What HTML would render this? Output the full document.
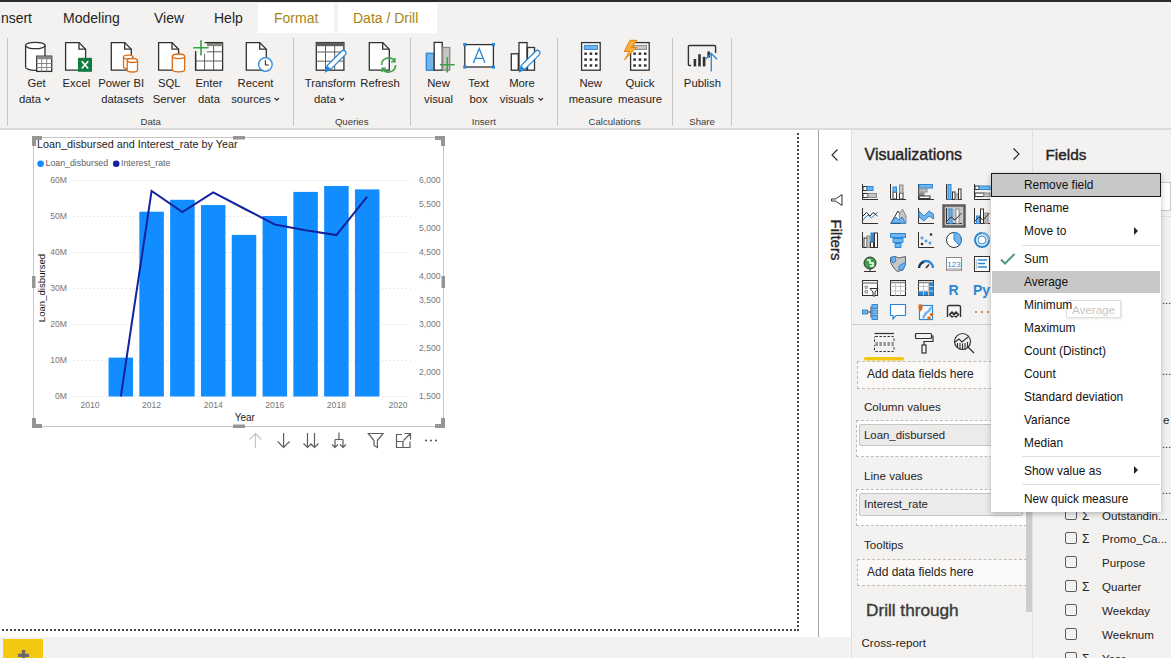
<!DOCTYPE html>
<html><head><meta charset="utf-8">
<style>
*{box-sizing:border-box;margin:0;padding:0}
html,body{width:1171px;height:658px;overflow:hidden;background:#fff}
body{position:relative;font-family:"Liberation Sans",sans-serif;color:#252423}
.a{position:absolute}
.t{position:absolute;white-space:nowrap;line-height:1}
#topbar{left:0;top:0;width:1171px;height:2px;background:#2b2b2b}
#ribbon{left:0;top:2px;width:1171px;height:126px;background:#f3f2f1}
#ribbonline{left:0;top:128px;width:1171px;height:2px;background:#dcdbda}
.tab{font-size:14px;top:11px}
.ctab{top:3px;height:30px;background:#fff}
.gold{color:#a8840f}
.sep{width:1px;background:#c8c6c4;top:38px;height:88px}
.lbl{font-size:11.3px;text-align:center;line-height:16px;position:absolute;white-space:nowrap}
.grp{font-size:9.6px;color:#3b3a39;position:absolute;top:115px;white-space:nowrap;line-height:13px}
#canvas{left:0;top:130px;width:818px;height:507px;background:#fff}
#dotr{left:797px;top:133px;width:2px;height:499px;background:repeating-linear-gradient(to bottom,#474747 0 2px,transparent 2px 4px)}
#dotb{left:2px;top:629px;width:797px;height:2px;background:repeating-linear-gradient(to right,#474747 0 2px,transparent 2px 4px)}
#vline{left:818px;top:130px;width:1px;height:507px;background:#a6a4a2}
#filters{left:819px;top:130px;width:33px;height:507px;background:#fff}
#viz{left:851px;top:130px;width:182px;height:528px;background:#f3f2f1;border-left:1px solid #e1dfdd}
#fields{left:1032px;top:130px;width:139px;height:528px;background:#f3f2f1;border-left:1px solid #e1dfdd}
#bottombar{left:0;top:637px;width:851px;height:21px;background:#f3f2f1}
#menu{left:991px;top:173px;width:170px;height:339px;background:#fff;box-shadow:0 2px 6px rgba(0,0,0,.25)}
.mi{position:absolute;left:33px;font-size:11.9px;white-space:nowrap;line-height:14px;color:#111}
</style></head><body>
<div class="a" id="topbar"></div>
<div class="a" id="ribbon"></div>
<div class="a" id="ribbonline"></div>
<!-- tabs -->
<div class="t tab" style="left:-3px">Insert</div>
<div class="t tab" style="left:63px">Modeling</div>
<div class="t tab" style="left:154px">View</div>
<div class="t tab" style="left:214px">Help</div>
<div class="a ctab" style="left:258px;width:76px"></div>
<div class="a ctab" style="left:338px;width:99px"></div>
<div class="t tab gold" style="left:274px">Format</div>
<div class="t tab gold" style="left:353px">Data / Drill</div>

<svg class="a" style="left:0;top:0" width="760" height="130" viewBox="0 0 760 130">
<g fill="none" stroke="#323130" stroke-width="1.3">
<!-- separators -->
<g stroke="#c8c6c4" stroke-width="1"><path d="M7.5 38V126M293.5 38V126M410.5 38V126M557.5 38V126M672.5 38V126M731.5 38V126"/></g>
<!-- Get data: cylinder -->
<path d="M25.6 45.5V67.2A9.7 3.2 0 0 0 45 67.2V45.5Z" fill="#fff"/>
<ellipse cx="35.3" cy="45.5" rx="9.7" ry="3.2" fill="#fff"/>
<rect x="36.7" y="56.2" width="15" height="15.2" fill="#fff"/>
<rect x="36.7" y="56.2" width="15" height="3" fill="#8a8886" stroke="none"/>
<path d="M36.7 63.5H51.7M36.7 67.5H51.7M41.7 59V71.4M46.7 59V71.4" stroke="#8a8886" stroke-width="1"/>
<!-- Excel -->
<path d="M65.6 42.6H79L85.6 49.2V70.2H65.6Z" fill="#fff"/>
<path d="M79 42.6V49.2H85.6"/>
<rect x="78" y="57.8" width="14" height="14" fill="#107c41" stroke="none"/>
<path d="M81.8 61.3L88.2 68.5M88.2 61.3L81.8 68.5" stroke="#fff" stroke-width="1.6"/>
<!-- Power BI datasets -->
<path d="M111.3 42.6H124.7L131.3 49.2V70.2H111.3Z" fill="#fff"/>
<path d="M124.7 42.6V49.2H131.3"/>
<g stroke="#d86c1a">
<path d="M123.5 57V66.5C123.5 68 125.5 68.7 128.2 68.7C131 68.7 133 68 133 66.5V57" fill="#fff"/>
<ellipse cx="128.2" cy="57" rx="4.8" ry="1.9" fill="#fff"/>
<path d="M127.2 60.5V70C127.2 71.3 129.5 72 132.4 72C135.4 72 137.5 71.3 137.5 70V60.5" fill="#fff"/>
<ellipse cx="132.4" cy="60.5" rx="5.1" ry="2" fill="#fff"/>
</g>
<!-- SQL Server -->
<path d="M158.6 42.6H172L178.6 49.2V70.2H158.6Z" fill="#fff"/>
<path d="M172 42.6V49.2H178.6"/>
<g stroke="#d86c1a">
<path d="M172.3 56.3V69.5C172.3 71 175 71.8 178.5 71.8C182 71.8 184.6 71 184.6 69.5V56.3" fill="#fff"/>
<ellipse cx="178.5" cy="56.3" rx="6.2" ry="2.3" fill="#fff"/>
</g>
<!-- Enter data -->
<rect x="195.6" y="42.6" width="27" height="27.6" fill="#fff"/>
<rect x="207" y="42.6" width="15.6" height="3.6" fill="#8a8886" stroke="none"/>
<path d="M195.6 51.8H222.6M195.6 61H222.6M204.6 46V70.2M213.6 46V70.2" stroke="#605e5c" stroke-width="1"/>
<rect x="194" y="41" width="13" height="13" fill="#f3f2f1" stroke="none"/><path d="M204.6 42.6H222.6M195.6 51V70.2" stroke="#323130" stroke-width="1.3"/><path d="M193.3 47.8H208.7M201 40.2V55.6" stroke="#3aa346" stroke-width="1.6"/>
<!-- Recent sources -->
<path d="M246.3 42.6H259.7L266.3 49.2V70.2H246.3Z" fill="#fff"/>
<path d="M259.7 42.6V49.2H266.3"/>
<circle cx="265.4" cy="64.5" r="6.8" fill="#fff" stroke="#2b88d8"/>
<path d="M265.4 60.3V65H268.8" stroke="#323130" stroke-width="1.1"/>
<!-- Transform data -->
<rect x="316.3" y="42.6" width="27.6" height="27.6" fill="#fff"/>
<rect x="316.3" y="42.6" width="27.6" height="3.6" fill="#605e5c" stroke="none"/>
<path d="M316.3 52H343.9M316.3 61.2H343.9M325.5 46V70.2M334.7 46V70.2" stroke="#605e5c" stroke-width="1"/>
<path d="M325.6 71.5L327.2 65.5L341.5 51.2C342.5 50.2 344.2 50.2 345.2 51.2C346.2 52.2 346.2 53.9 345.2 54.9L330.9 69.2Z" fill="#fff" stroke="#2b88d8" stroke-width="1.3"/>
<path d="M325.6 71.5L327.2 65.5L330.9 69.2Z" fill="#2b88d8" stroke="none"/>
<!-- Refresh -->
<path d="M369.3 42.6H382.7L389.3 49.2V70.2H369.3Z" fill="#fff"/>
<path d="M382.7 42.6V49.2H389.3"/>
<g stroke="#3aa346" stroke-width="1.6" fill="none">
<path d="M381.5 65A7 7 0 0 1 394.6 61.5M391.2 61.8H394.8V58"/>
<path d="M395.5 65A7 7 0 0 1 382.4 68.5M385.8 68.2H382.2V72"/>
</g>
<!-- New visual -->
<rect x="426.3" y="53.3" width="7.6" height="16.9" fill="#72b4eb" stroke="#2b88d8"/>
<rect x="434.2" y="42.4" width="8" height="27.8" fill="#fff"/>
<rect x="442.7" y="47.5" width="7" height="22.7" fill="#c8c6c4" stroke="#8a8886"/>
<path d="M440 64.7H454.6M447.3 57V72.5" stroke="#3aa346" stroke-width="1.6"/>
<!-- Text box -->
<rect x="464.8" y="44.6" width="28.6" height="22.4" fill="#fff"/>
<g fill="#2b88d8" stroke="none"><rect x="463.2" y="43" width="3.2" height="3.2"/><rect x="491.8" y="43" width="3.2" height="3.2"/><rect x="463.2" y="65.4" width="3.2" height="3.2"/><rect x="491.8" y="65.4" width="3.2" height="3.2"/></g>
<path d="M473.4 63L479.2 48.4L485 63M475.3 58.3H483" stroke="#2b88d8" stroke-width="1.3"/>
<!-- More visuals -->
<rect x="511.3" y="53.8" width="7" height="16.4" fill="#fff"/>
<rect x="519" y="42.6" width="8" height="27.6" fill="#fff"/>
<rect x="527.5" y="47.5" width="7" height="22.7" fill="#fff"/>
<path d="M519.6 71.5L521.2 65.5L535.5 51.2C536.5 50.2 538.2 50.2 539.2 51.2C540.2 52.2 540.2 53.9 539.2 54.9L524.9 69.2Z" fill="#fff" stroke="#2b88d8" stroke-width="1.3"/>
<path d="M519.6 71.5L521.2 65.5L524.9 69.2Z" fill="#2b88d8" stroke="none"/>
<!-- New measure -->
<rect x="581.6" y="42.6" width="18.6" height="27.6" fill="#fff"/>
<rect x="584.3" y="45.4" width="13.2" height="4" fill="#72b4eb" stroke="#2b88d8" stroke-width="1"/>
<g fill="#323130" stroke="none">
<rect x="584.3" y="52.5" width="2.6" height="2.4"/><rect x="589.6" y="52.5" width="2.6" height="2.4"/><rect x="594.9" y="52.5" width="2.6" height="2.4"/>
<rect x="584.3" y="58.4" width="2.6" height="2.4"/><rect x="589.6" y="58.4" width="2.6" height="2.4"/><rect x="594.9" y="58.4" width="2.6" height="2.4"/>
<rect x="584.3" y="64.3" width="2.6" height="2.4"/><rect x="589.6" y="64.3" width="2.6" height="2.4"/><rect x="594.9" y="64.3" width="2.6" height="2.4"/>
</g>
<!-- Quick measure -->
<rect x="630.6" y="42.6" width="18.6" height="27.6" fill="#fff"/>
<rect x="633.3" y="45.4" width="13.2" height="4" fill="#c8c6c4" stroke="#8a8886" stroke-width="1"/>
<g fill="#323130" stroke="none">
<rect x="633.3" y="52.5" width="2.6" height="2.4"/><rect x="638.6" y="52.5" width="2.6" height="2.4"/><rect x="643.9" y="52.5" width="2.6" height="2.4"/>
<rect x="633.3" y="58.4" width="2.6" height="2.4"/><rect x="638.6" y="58.4" width="2.6" height="2.4"/><rect x="643.9" y="58.4" width="2.6" height="2.4"/>
<rect x="633.3" y="64.3" width="2.6" height="2.4"/><rect x="638.6" y="64.3" width="2.6" height="2.4"/><rect x="643.9" y="64.3" width="2.6" height="2.4"/>
</g>
<path d="M630 40.3L624.3 51.5H629.5L624.5 59.8L636.6 47.5H631.5L636.8 40.3Z" fill="#fcb041" stroke="#e67e00" stroke-width="1"/>
<!-- Publish -->
<path d="M691 65.5H689.5C688.9 65.5 688.4 65 688.4 64.4V46.6C688.4 46 688.9 45.5 689.5 45.5H714.5C715.1 45.5 715.6 46 715.6 46.6V53" stroke="#323130" stroke-width="1.4"/>
<g fill="#323130" stroke="none"><rect x="693.6" y="59" width="2.6" height="7.4"/><rect x="698.2" y="54.2" width="2.6" height="12.2"/><rect x="702.8" y="56.8" width="2.6" height="9.6"/><rect x="707.4" y="51.5" width="2.6" height="6"/></g>
<path d="M711.3 71.5V53.5M705.5 59.3L711.3 53.5L717.1 59.3" stroke="#2b88d8" stroke-width="1.3"/>
</g>
</svg>
<div class="lbl" style="left:-13.5px;width:100px;top:75px">Get</div>
<div class="lbl" style="left:-20px;width:100px;top:91px">data</div>
<div class="lbl" style="left:26.4px;width:100px;top:75px">Excel</div>
<div class="lbl" style="left:71.2px;width:100px;top:75px">Power BI</div>
<div class="lbl" style="left:72.5px;width:100px;top:91px">datasets</div>
<div class="lbl" style="left:119.3px;width:100px;top:75px">SQL</div>
<div class="lbl" style="left:119.3px;width:100px;top:91px">Server</div>
<div class="lbl" style="left:159px;width:100px;top:75px">Enter</div>
<div class="lbl" style="left:159px;width:100px;top:91px">data</div>
<div class="lbl" style="left:205.5px;width:100px;top:75px">Recent</div>
<div class="lbl" style="left:201px;width:100px;top:91px">sources</div>
<div class="grp" style="left:100.6px;width:100px;text-align:center">Data</div>
<div class="lbl" style="left:280.2px;width:100px;top:75px">Transform</div>
<div class="lbl" style="left:275px;width:100px;top:91px">data</div>
<div class="lbl" style="left:330px;width:100px;top:75px">Refresh</div>
<div class="grp" style="left:301.7px;width:100px;text-align:center">Queries</div>
<div class="lbl" style="left:388.5px;width:100px;top:75px">New</div>
<div class="lbl" style="left:388.5px;width:100px;top:91px">visual</div>
<div class="lbl" style="left:428.5px;width:100px;top:75px">Text</div>
<div class="lbl" style="left:428.5px;width:100px;top:91px">box</div>
<div class="lbl" style="left:472px;width:100px;top:75px">More</div>
<div class="lbl" style="left:467px;width:100px;top:91px">visuals</div>
<div class="grp" style="left:433.8px;width:100px;text-align:center">Insert</div>
<div class="lbl" style="left:540.7px;width:100px;top:75px">New</div>
<div class="lbl" style="left:540.7px;width:100px;top:91px">measure</div>
<div class="lbl" style="left:590px;width:100px;top:75px">Quick</div>
<div class="lbl" style="left:590px;width:100px;top:91px">measure</div>
<div class="grp" style="left:564.7px;width:100px;text-align:center">Calculations</div>
<div class="lbl" style="left:652.4px;width:100px;top:75px">Publish</div>
<div class="grp" style="left:652.1px;width:100px;text-align:center">Share</div>
<svg class="a" style="left:0;top:0" width="560" height="110"><g fill="none" stroke="#323130" stroke-width="1.1">
<path d="M45 98L47.2 100.2L49.4 98M274.6 98L276.8 100.2L279 98M339.6 98L341.8 100.2L344 98M538.6 98L540.8 100.2L543 98"/></g></svg>

<div class="a" id="canvas"></div>
<svg class="a" style="left:0;top:0" width="818" height="637" viewBox="0 0 818 637">
<rect x="33.5" y="137.5" width="410" height="289" fill="none" stroke="#c8c6c4" stroke-width="1"/>
<line x1="74" y1="396.5" x2="412" y2="396.5" stroke="#d6d6d6" stroke-width="1" stroke-dasharray="1 3"/>
<line x1="74" y1="180.5" x2="412" y2="180.5" stroke="#d6d6d6" stroke-width="1" stroke-dasharray="1 3"/>
<line x1="74" y1="216.5" x2="412" y2="216.5" stroke="#d6d6d6" stroke-width="1" stroke-dasharray="1 3"/>
<line x1="74" y1="252.5" x2="412" y2="252.5" stroke="#d6d6d6" stroke-width="1" stroke-dasharray="1 3"/>
<line x1="74" y1="288.5" x2="412" y2="288.5" stroke="#d6d6d6" stroke-width="1" stroke-dasharray="1 3"/>
<line x1="74" y1="324.5" x2="412" y2="324.5" stroke="#d6d6d6" stroke-width="1" stroke-dasharray="1 3"/>
<line x1="74" y1="360.5" x2="412" y2="360.5" stroke="#d6d6d6" stroke-width="1" stroke-dasharray="1 3"/>
<rect x="108.55" y="357.6" width="24.5" height="38.90" fill="#118dff"/>
<rect x="139.35" y="211.7" width="24.5" height="184.80" fill="#118dff"/>
<rect x="170.15" y="199.8" width="24.5" height="196.70" fill="#118dff"/>
<rect x="200.95" y="205.1" width="24.5" height="191.40" fill="#118dff"/>
<rect x="231.75" y="234.9" width="24.5" height="161.60" fill="#118dff"/>
<rect x="262.55" y="216" width="24.5" height="180.50" fill="#118dff"/>
<rect x="293.35" y="191.9" width="24.5" height="204.60" fill="#118dff"/>
<rect x="324.15" y="186" width="24.5" height="210.50" fill="#118dff"/>
<rect x="354.95" y="189.4" width="24.5" height="207.10" fill="#118dff"/>
<polyline points="120.8,396.5 151.6,190.9 182.4,212.1 213.2,192.3 244.0,208.5 274.8,224.5 305.6,230.2 336.4,235.1 367.2,196.6" fill="none" stroke="#12239e" stroke-width="2" stroke-linejoin="miter"/>
<path d="M32 136H42V140H36V146H32Z" fill="#979593"/>
<path d="M445 136H435V140H441V146H445Z" fill="#979593"/>
<path d="M32 428H42V424H36V418H32Z" fill="#979593"/>
<path d="M445 428H435V424H441V418H445Z" fill="#979593"/>
<rect x="233" y="136" width="12" height="3.5" fill="#979593"/>
<rect x="233" y="424.5" width="12" height="3.5" fill="#979593"/>
<rect x="32" y="276" width="3.5" height="12" fill="#979593"/>
<rect x="441.5" y="276" width="3.5" height="12" fill="#979593"/>
<circle cx="40.6" cy="163.8" r="3.3" fill="#118dff"/>
<circle cx="116.2" cy="163.8" r="3.3" fill="#12239e"/>
<g fill="none" stroke="#605e5c" stroke-width="1.2">
<path d="M255.4 448V433.5M249.5 439.5L255.4 433.5L261.3 439.5" stroke="#c8c6c4"/>
<path d="M283.6 433V447.5M277.7 441.5L283.6 447.5L289.5 441.5"/>
<path d="M307.5 433V447.5M303.5 443.5L307.5 447.5L311.5 443.5M314.5 433V447.5M310.5 443.5L314.5 447.5L318.5 443.5"/>
<path d="M339 432.5V439.5M335 439.5H343M335 439.5V447.5M343 439.5V447.5M332 444.5L335 447.5L338 444.5M340 444.5L343 447.5L346 444.5"/>
<path d="M368.3 433.5H383.1L377.4 440.5V447.5L374 445.5V440.5Z"/>
<path d="M402 434.5H396.5V447.5H410V441.5M396.5 441.5H403V447.5M404.5 433.5H410.5V439.5M410.5 433.5L403.5 440.5"/>
</g>
<g fill="#605e5c"><circle cx="426" cy="440.5" r="1.1"/><circle cx="431" cy="440.5" r="1.1"/><circle cx="436" cy="440.5" r="1.1"/></g>
</svg><div class="t" style="left:37px;top:138.5px;font-size:10.8px;color:#252423">Loan_disbursed and Interest_rate by Year</div>
<div class="t" style="left:45.5px;top:159.3px;font-size:8.8px;color:#605e5c">Loan_disbursed</div>
<div class="t" style="left:121px;top:159.3px;font-size:8.8px;color:#605e5c">Interest_rate</div>
<div class="a" style="left:27px;top:162px;width:40px;font-size:8.6px;color:#777;text-align:right;line-height:36px">60M<br>50M<br>40M<br>30M<br>20M<br>10M<br>0M</div>
<div class="a" style="left:419px;top:168px;width:40px;font-size:8.6px;color:#777;text-align:left;line-height:24px">6,000<br>5,500<br>5,000<br>4,500<br>4,000<br>3,500<br>3,000<br>2,500<br>2,000<br>1,500</div>
<div class="t" style="left:42px;top:288px;font-size:9.6px;color:#111;transform:translate(-50%,-50%) rotate(-90deg);transform-origin:center">Loan_disbursed</div>
<div class="a" style="left:60px;top:400px;width:60px;text-align:center;font-size:8.6px;color:#777;line-height:10px">2010</div>
<div class="a" style="left:121.6px;top:400px;width:60px;text-align:center;font-size:8.6px;color:#777;line-height:10px">2012</div>
<div class="a" style="left:183.2px;top:400px;width:60px;text-align:center;font-size:8.6px;color:#777;line-height:10px">2014</div>
<div class="a" style="left:244.8px;top:400px;width:60px;text-align:center;font-size:8.6px;color:#777;line-height:10px">2016</div>
<div class="a" style="left:306.4px;top:400px;width:60px;text-align:center;font-size:8.6px;color:#777;line-height:10px">2018</div>
<div class="a" style="left:368px;top:400px;width:60px;text-align:center;font-size:8.6px;color:#777;line-height:10px">2020</div>
<div class="t" style="left:234.7px;top:412.5px;font-size:10px;color:#252423">Year</div>

<div class="a" id="dotr"></div>
<div class="a" id="dotb"></div>
<div class="a" id="vline"></div>
<div class="a" id="filters"></div>
<div class="a" id="viz"></div>
<div class="a" id="fields"></div>
<div class="a" id="bottombar"></div>
<div class="a" style="left:3px;top:638px;width:1px;height:20px;background:#c8c6c4"></div><div class="a" style="left:4px;top:639px;width:39px;height:19px;background:#f2c811"></div>

<!-- Filters pane -->
<svg class="a" style="left:819px;top:129px" width="33" height="140" viewBox="819 129 33 140">
<path d="M837.5 149.5L832 155L837.5 160.5" fill="none" stroke="#252423" stroke-width="1.1"/>
<path d="M842 194.5V205.5L835.5 201H831.5V199H835.5Z" fill="none" stroke="#323130" stroke-width="1"/>
</svg>
<div class="t" style="left:835.5px;top:240px;font-size:15px;-webkit-text-stroke:0.35px #252423;color:#252423;transform:translate(-50%,-50%) rotate(90deg)">Filters</div>
<!-- Viz pane -->
<div class="t" style="left:864.5px;top:146.5px;font-size:16px;-webkit-text-stroke:0.4px #252423;color:#252423">Visualizations</div>
<svg class="a" style="left:1010px;top:146px" width="14" height="16"><path d="M3.5 2.5L9 8L3.5 13.5" fill="none" stroke="#252423" stroke-width="1.1"/></svg>
<div class="a" style="left:856.5px;top:360.5px;width:170px;height:28px;border:1px dashed #bebbb8;background:#faf9f8"></div>
<div class="t" style="left:867px;top:368px;font-size:12px;color:#252423">Add data fields here</div>
<div class="t" style="left:864px;top:401px;font-size:11.6px;color:#252423">Column values</div>
<div class="a" style="left:856px;top:420px;width:170.5px;height:37px;border:1px dashed #bebbb8;background:#fff"></div>
<div class="a" style="left:859px;top:423.5px;width:163.5px;height:22.5px;border:1px solid #c8c6c4;border-radius:2px;background:#ecebea"></div>
<div class="t" style="left:864px;top:429.5px;font-size:11.4px;color:#252423">Loan_disbursed</div>
<div class="t" style="left:864px;top:469.5px;font-size:11.6px;color:#252423">Line values</div>
<div class="a" style="left:856px;top:488.5px;width:170.5px;height:37px;border:1px dashed #bebbb8;background:#fff"></div>
<div class="a" style="left:859px;top:493px;width:163.5px;height:22.5px;border:1px solid #c8c6c4;border-radius:2px;background:#ecebea"></div>
<div class="t" style="left:864px;top:498.5px;font-size:11.4px;color:#252423">Interest_rate</div>
<div class="t" style="left:864px;top:539px;font-size:11.6px;color:#252423">Tooltips</div>
<div class="a" style="left:856.5px;top:559px;width:170px;height:27px;border:1px dashed #bebbb8;background:#faf9f8"></div>
<div class="t" style="left:867px;top:566px;font-size:12px;color:#252423">Add data fields here</div>
<div class="t" style="left:866px;top:602px;font-size:17.2px;-webkit-text-stroke:0.4px #3b3a39;color:#3b3a39">Drill through</div>
<div class="t" style="left:861.5px;top:637px;font-size:11.6px;color:#252423">Cross-report</div>
<div class="a" style="left:1026px;top:510px;width:6px;height:102px;background:#cfcdcb"></div>
<!-- Fields pane -->
<div class="t" style="left:1045.5px;top:146.5px;font-size:15.3px;-webkit-text-stroke:0.4px #252423;color:#252423">Fields</div>
<div class="a" style="left:1045px;top:182px;width:126px;height:29px;background:#fff;border:1px solid #c8c6c4"></div>
<div class="a" style="left:1033px;top:216px;width:138px;height:1px;background:#e1dfdd"></div>
<div class="a" style="left:1033px;top:502px;width:138px;height:156px;overflow:hidden">
<svg class="a" style="left:0;top:0" width="138" height="156" viewBox="1033 502 138 156">
<g fill="none" stroke="#605e5c" stroke-width="1">
<rect x="1065.5" y="508.5" width="11" height="11" rx="1.5"/>
<rect x="1065.5" y="532.5" width="11" height="11" rx="1.5"/>
<rect x="1065.5" y="556.5" width="11" height="11" rx="1.5"/>
<rect x="1065.5" y="580.5" width="11" height="11" rx="1.5"/>
<rect x="1065.5" y="604.5" width="11" height="11" rx="1.5"/>
<rect x="1065.5" y="628.5" width="11" height="11" rx="1.5"/>
<rect x="1065.5" y="652.5" width="11" height="11" rx="1.5"/>
</g>
</svg>
<div class="t" style="left:49px;top:8px;font-size:12px;color:#252423">Σ</div>
<div class="t" style="left:69px;top:8px;font-size:11.6px;color:#252423">Outstandin...</div>
<div class="t" style="left:49px;top:31px;font-size:12px;color:#252423">Σ</div>
<div class="t" style="left:69px;top:31px;font-size:11.6px;color:#252423">Promo_Ca...</div>
<div class="t" style="left:69px;top:55px;font-size:11.6px;color:#252423">Purpose</div>
<div class="t" style="left:49px;top:79px;font-size:12px;color:#252423">Σ</div>
<div class="t" style="left:69px;top:79px;font-size:11.6px;color:#252423">Quarter</div>
<div class="t" style="left:69px;top:103px;font-size:11.6px;color:#252423">Weekday</div>
<div class="t" style="left:69px;top:127px;font-size:11.6px;color:#252423">Weeknum</div>
<div class="t" style="left:49px;top:151px;font-size:12px;color:#252423">Σ</div>
<div class="t" style="left:69px;top:151px;font-size:11.6px;color:#252423">Year</div>
</div>
<!-- bottom bar plus -->
<svg class="a" style="left:4px;top:639px" width="39" height="19"><path d="M19.5 11V22M14 16.3H25" stroke="#69676a" stroke-width="3.3"/></svg>
<svg class="a" style="left:851px;top:129px" width="182" height="529" viewBox="851 129 182 529">
<g stroke-width="1" fill="none" stroke="#323130">
<!-- row1 -->
<g transform="translate(862,184)">
<path d="M0.5 0V15.5H16"/>
<rect x="1" y="2.5" width="4" height="4" fill="#fff" stroke="#323130"/><rect x="5" y="2.5" width="6" height="4" fill="#72b4eb" stroke="#2b88d8"/>
<rect x="1" y="9.5" width="5" height="4" fill="#fff" stroke="#323130"/><rect x="6" y="9.5" width="8.5" height="4" fill="#c8c6c4" stroke="#8a8886"/>
</g>
<g transform="translate(890,184)">
<path d="M0.5 0V15.5H16"/>
<rect x="3" y="8" width="3.5" height="7" fill="#fff"/><rect x="3" y="3" width="3.5" height="5" fill="#72b4eb" stroke="#2b88d8"/>
<rect x="9.5" y="9" width="3.5" height="6" fill="#fff"/><rect x="9.5" y="1" width="3.5" height="8" fill="#c8c6c4" stroke="#8a8886"/>
</g>
<g transform="translate(918,184)">
<path d="M0.5 0V15.5H16"/>
<rect x="1" y="0.5" width="13.5" height="3.5" fill="#72b4eb" stroke="#2b88d8"/>
<rect x="1" y="5" width="8" height="3" fill="#c8c6c4" stroke="#8a8886"/>
<rect x="1" y="9" width="5" height="2.5" fill="#8a8886" stroke="#8a8886"/>
<rect x="1" y="12" width="11" height="2.5" fill="#fff"/>
</g>
<g transform="translate(946,184)">
<path d="M0.5 0V15.5H16"/>
<rect x="2" y="0.5" width="3" height="15" fill="#72b4eb" stroke="#2b88d8"/>
<rect x="6.5" y="8" width="2.5" height="7.5" fill="#fff"/><rect x="9.5" y="10" width="2.5" height="5.5" fill="#c8c6c4" stroke="#8a8886"/><rect x="12.5" y="5" width="2.5" height="10.5" fill="#fff"/>
</g>
<g transform="translate(974,184)">
<path d="M0.5 0V15.5H16"/>
<rect x="1" y="2" width="4" height="3.5" fill="#fff"/><rect x="5" y="2" width="11" height="3.5" fill="#72b4eb" stroke="#2b88d8"/>
<rect x="1" y="9" width="9" height="3.5" fill="#fff"/><rect x="10" y="9" width="6" height="3.5" fill="#c8c6c4" stroke="#8a8886"/>
</g>
<!-- row2 -->
<g transform="translate(862,208)">
<path d="M0.5 0V15.5H16"/>
<path d="M1 12L6 7L9.5 10L15.5 4" stroke="#2b88d8"/>
<path d="M1 8L4.5 4.5L8 8L11 4.5L15.5 8"/>
</g>
<g transform="translate(890,208)">
<path d="M0.5 15.5H16"/>
<path d="M1 15L8 3L15.5 15Z" fill="#fff"/>
<path d="M9 7L12.5 1L16 8V15.5H11Z" fill="#c8c6c4" stroke="#8a8886"/>
<path d="M1 15L6 9L9 12L12 9L15.5 15Z" fill="#72b4eb" stroke="#2b88d8"/>
</g>
<g transform="translate(918,208)">
<path d="M0.5 0V15.5H16"/>
<path d="M1 3L6 8L11 3L15.5 6V11L11 8L6 13L1 9Z" fill="#72b4eb" stroke="#2b88d8"/>
</g>
<g transform="translate(946,208)">
<rect x="-2.5" y="-2.5" width="21" height="21" fill="#c8c6c4" stroke="#605e5c" stroke-width="2.5"/>
<path d="M0.5 0V15.5H16"/>
<rect x="3" y="1" width="3" height="14.5" fill="#72b4eb" stroke="#2b88d8"/>
<rect x="10" y="1" width="3" height="14.5" fill="#fff" stroke="#8a8886"/>
<path d="M1 13L5 9L9 12L15.5 5"/>
</g>
<g transform="translate(974,208)">
<path d="M0.5 0V15.5H16"/>
<rect x="2.5" y="8" width="3" height="7.5" fill="#72b4eb" stroke="#2b88d8"/>
<rect x="6.5" y="1" width="3" height="14.5" fill="#fff"/>
<rect x="11" y="5" width="3" height="10.5" fill="#c8c6c4" stroke="#8a8886"/>
<path d="M1 13L5 9L9 12L15.5 5"/>
</g>
<!-- row3 -->
<g transform="translate(862,232)">
<path d="M0.5 0V15.5H16"/>
<rect x="2" y="6" width="3" height="9.5" fill="#fff"/><rect x="5" y="4" width="3" height="11.5" fill="#c8c6c4" stroke="#8a8886"/>
<rect x="8.5" y="10" width="3" height="5.5" fill="#fff"/><rect x="9" y="1" width="3" height="9" fill="#2b88d8" stroke="#2b88d8"/><rect x="12.5" y="1" width="3" height="14.5" fill="#fff"/>
</g>
<g transform="translate(890,232)">
<path d="M0.5 1.5H15.5V5.5H0.5Z" fill="#72b4eb" stroke="#2b88d8"/>
<path d="M3 6.5H13V10.5H3Z" fill="#72b4eb" stroke="#2b88d8"/>
<path d="M5 11.5H11V15.5H5Z" fill="#72b4eb" stroke="#2b88d8"/>
</g>
<g transform="translate(918,232)">
<path d="M0.5 0V15.5H16"/>
<circle cx="4" cy="6" r="1.2" fill="#72b4eb" stroke="#2b88d8" stroke-width=".6"/><circle cx="8" cy="9" r="1.2" fill="#72b4eb" stroke="#2b88d8" stroke-width=".6"/><circle cx="12" cy="11" r="1.2" fill="#72b4eb" stroke="#2b88d8" stroke-width=".6"/>
<circle cx="13" cy="2.5" r="1.3" fill="#323130" stroke="none"/><circle cx="4" cy="12" r="1.3" fill="#323130" stroke="none"/>
</g>
<g transform="translate(946,232)">
<circle cx="8" cy="8" r="7.5" fill="#fff"/>
<path d="M8 0.5A7.5 7.5 0 0 1 13.3 13.3L8 8Z" fill="#72b4eb" stroke="#2b88d8"/>
</g>
<g transform="translate(974,232)">
<circle cx="8" cy="8" r="7" fill="none" stroke="#2b88d8" stroke-width="2"/>
<circle cx="8" cy="8" r="4" fill="#fff" stroke="#2b88d8" stroke-width="1"/>
<path d="M8 1A7 7 0 0 1 15 8" stroke="#72b4eb" stroke-width="2"/>
</g>
<!-- row4 -->
<g transform="translate(862,256)">
<circle cx="8" cy="7" r="6" fill="#3aa346" stroke="#323130"/>
<path d="M5 4H8V7H11V10H8" stroke="#fff" stroke-width="1.5"/>
<path d="M2 15.5H14M8 13V15.5"/>
</g>
<g transform="translate(890,256)">
<path d="M0.5 1.5L5 0.5L9 2L15.5 0.5V8L13 14L7 15.5L3 11L0.5 6Z" fill="#c8c6c4" stroke="#605e5c"/>
<path d="M0.5 1.5L5 0.5L6 5L3 7Z M9 10L15.5 6V8L13 14L9 14Z" fill="#72b4eb" stroke="#2b88d8"/>
</g>
<g transform="translate(918,256)">
<path d="M1 12A7 7 0 0 1 15 12" stroke="#2b88d8" stroke-width="2.4"/>
<path d="M1 12A7 7 0 0 1 6 6" stroke="#323130" stroke-width="2"/>
<path d="M8 12L11 8.5" stroke="#323130" stroke-width="1.6"/>
</g>
<g transform="translate(946,256)">
<rect x="0.5" y="1.5" width="15" height="13" fill="#fff" stroke="#8a8886"/>
<rect x="1" y="12" width="14" height="2.5" fill="#c8c6c4" stroke="none"/>
<text x="8" y="10.5" font-size="8" font-family="Liberation Sans" fill="#2b88d8" stroke="none" text-anchor="middle">123</text>
</g>
<g transform="translate(974,256)">
<rect x="0.5" y="0.5" width="15" height="15" fill="#fff"/>
<path d="M4 4H13M4 7.5H11M4 11H13" stroke="#2b88d8" stroke-width="1.6"/>
<path d="M2.5 3V13" stroke="#c8c6c4" stroke-width="1.5"/>
</g>
<!-- row5 -->
<g transform="translate(862,280)">
<rect x="0.5" y="0.5" width="15" height="15" fill="#fff"/>
<path d="M0.5 3H15.5" stroke="#8a8886" stroke-width="1.5"/>
<rect x="3" y="6" width="2.5" height="2.5" fill="#c8c6c4" stroke="#8a8886" stroke-width=".7"/><rect x="3" y="10.5" width="2.5" height="2.5" fill="#c8c6c4" stroke="#8a8886" stroke-width=".7"/>
<path d="M8 8.5H16L13 12V16H11V12Z" fill="#fff" stroke="#323130"/>
</g>
<g transform="translate(890,280)">
<rect x="0.5" y="0.5" width="15" height="15" fill="#fff"/>
<path d="M0.5 2.5H15.5" stroke="#8a8886" stroke-width="1.5"/>
<path d="M0.5 6.5H15.5M0.5 11H15.5M5.5 3V15.5M10.5 3V15.5" stroke="#c8c6c4"/>
</g>
<g transform="translate(918,280)">
<rect x="0.5" y="0.5" width="15" height="15" fill="#fff"/>
<path d="M0.5 2.5H15.5" stroke="#8a8886" stroke-width="1.5"/>
<rect x="10.5" y="3" width="5" height="12.5" fill="#2b88d8" stroke="none"/><rect x="0.5" y="11" width="15" height="4.5" fill="#2b88d8" stroke="none"/>
<path d="M0.5 6.5H15.5M0.5 11H15.5M5.5 3V15.5M10.5 3V15.5" stroke="#c8c6c4"/>
</g>
<text x="953.5" y="295" font-size="14" font-weight="bold" font-family="Liberation Sans" fill="#2b88d8" stroke="none" text-anchor="middle">R</text>
<text x="973" y="295" font-size="14" font-weight="bold" font-family="Liberation Sans" fill="#2b88d8" stroke="none">Py</text>
<!-- row6 -->
<g transform="translate(862,304)">
<rect x="0.5" y="6" width="5" height="4" fill="#72b4eb" stroke="#2b88d8"/>
<path d="M5.5 8H9M9 2.5V13.5"/>
<rect x="10" y="0.5" width="5.5" height="4" fill="#72b4eb" stroke="#2b88d8"/><rect x="10" y="6" width="5.5" height="4" fill="#72b4eb" stroke="#2b88d8"/><rect x="10" y="11.5" width="5.5" height="4" fill="#72b4eb" stroke="#2b88d8"/>
</g>
<g transform="translate(890,304)">
<path d="M0.5 0.5H15.5V11.5H6L3 15V11.5H0.5Z" fill="#fff" stroke="#2b88d8" stroke-width="1.2"/>
</g>
<g transform="translate(918,304)">
<rect x="1.5" y="1.5" width="13" height="14" fill="#fff" stroke="#2b88d8" stroke-width="1.2"/>
<path d="M5 14L8 9L11 7L13 3" stroke="#72b4eb" stroke-width="2.5"/>
<path d="M0.5 0.5H4.5V5L2.5 7.5L0.5 5Z" fill="#d86c1a" stroke="none"/>
<circle cx="13.5" cy="10.5" r="1.8" fill="#d86c1a" stroke="none"/><circle cx="11" cy="14" r="1.8" fill="#d86c1a" stroke="none"/>
</g>
<g transform="translate(946,304)">
<path d="M1.5 13V3C1.5 2 2 1.5 3 1.5H13C14 1.5 14.5 2 14.5 3V13" stroke="#323130" stroke-width="1.4"/>
<path d="M3.5 10.5L6 8L8.5 10.5L6 13ZM7.5 10.5L10 8L12.5 10.5L10 13Z" fill="none" stroke="#323130" stroke-width="1.5"/>
</g>
<g fill="#d86c1a" stroke="none"><circle cx="976" cy="312" r="1"/><circle cx="982" cy="312" r="1"/><circle cx="988" cy="312" r="1"/></g>
<!-- separator -->
<path d="M852 324.5H1032" stroke="#d2d0ce"/>
<!-- tab icons -->
<g transform="translate(874,333)">
<path d="M0.5 0.5H20" stroke="#323130" stroke-width="1.2"/>
<rect x="0.5" y="3.5" width="19.5" height="6.5" stroke-dasharray="2.4 1.6" rx="1"/>
<rect x="0.5" y="12" width="19.5" height="6.5" stroke-dasharray="2.4 1.6" rx="1"/>
</g>
<g transform="translate(915,333)">
<rect x="0.5" y="0.5" width="16" height="5" rx="1" stroke-width="1.2"/>
<path d="M16.5 3H18V8.5H9V12" stroke-width="1.2"/>
<rect x="7" y="12" width="4" height="8" stroke-width="1.2"/>
</g>
<g transform="translate(954,333)">
<circle cx="8.5" cy="8.5" r="8" stroke-width="1.2"/>
<path d="M1 9L5 6L8 9L14 4M3.5 10V15M6 10V16.5M8.5 10.5V17M11 10V16.5M13.5 9V15" stroke-width="1.1"/>
<path d="M14 14L20 20" stroke-width="1.3"/>
</g>
</g>
<rect x="864" y="357" width="40" height="3.5" rx="1.5" fill="#f2c811"/>
<!-- filters pane icons -->
</svg>
<div class="t" style="left:1162px;top:295px;font-size:11px;color:#252423">...</div>
<div class="t" style="left:1162px;top:366px;font-size:11px;color:#252423">...</div>
<div class="t" style="left:1163px;top:414px;font-size:11.6px;color:#252423">e</div>
<div class="t" style="left:1162px;top:439px;font-size:11px;color:#252423">...</div>
<div class="t" style="left:1162px;top:485px;font-size:11px;color:#252423">...</div>
<div class="a" id="menu">
<div class="a" style="left:0;top:0;width:170px;height:24px;background:#c8c8c8;border:1.5px solid #1b1a19"></div>
<div class="mi" style="top:5px">Remove field</div>
<div class="mi" style="top:28px">Rename</div>
<div class="mi" style="top:51px">Move to</div>
<svg class="a" style="left:142px;top:53px" width="6" height="10"><path d="M1 1L5 5L1 9Z" fill="#252423"/></svg>
<div class="a" style="left:31px;top:72px;width:138px;height:1px;background:#e1dfdd"></div>
<svg class="a" style="left:8px;top:79px" width="18" height="14"><path d="M2 7.5L6 11.5L15.5 2" fill="none" stroke="#4f9a7c" stroke-width="2"/></svg>
<div class="mi" style="top:79px">Sum</div>
<div class="a" style="left:1px;top:98px;width:168px;height:22px;background:#c8c8c8"></div>
<div class="mi" style="top:102px">Average</div>
<div class="a" style="left:74.5px;top:126.5px;width:55.5px;height:18px;background:#fff;border:1px solid #e1dfdd;box-shadow:1px 1px 2px rgba(0,0,0,.1)"></div>
<div class="t" style="left:81px;top:131px;font-size:11.6px;color:#c8c6c4">Average</div>
<div class="mi" style="top:125px">Minimum</div>
<div class="mi" style="top:148px">Maximum</div>
<div class="mi" style="top:171px">Count (Distinct)</div>
<div class="mi" style="top:194px">Count</div>
<div class="mi" style="top:217px">Standard deviation</div>
<div class="mi" style="top:240px">Variance</div>
<div class="mi" style="top:263px">Median</div>
<div class="a" style="left:31px;top:283px;width:138px;height:1px;background:#e1dfdd"></div>
<div class="mi" style="top:291px">Show value as</div>
<svg class="a" style="left:142px;top:292px" width="6" height="10"><path d="M1 1L5 5L1 9Z" fill="#252423"/></svg>
<div class="a" style="left:31px;top:311px;width:138px;height:1px;background:#e1dfdd"></div>
<div class="mi" style="top:319px">New quick measure</div>
</div>

</body></html>
